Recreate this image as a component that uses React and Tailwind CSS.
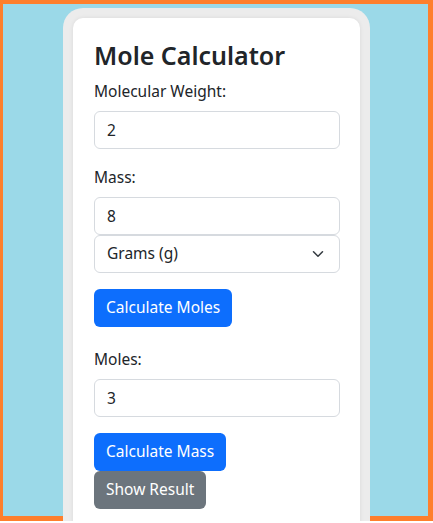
import React from 'react';

const font = { fontFamily: '"Noto Sans", "Open Sans", sans-serif' };

const Field = ({ label, value, className = '' }) => (
  <div className={className}>
    <label className="block text-[15.5px] leading-6 mb-2 text-[#212529]">{label}</label>
    <input
      type="text"
      defaultValue={value}
      className="block w-full h-[38px] px-3 text-[15.5px] text-[#212529] bg-white border border-[#d6dadf] rounded-[6px] outline-none"
    />
  </div>
);

const App = () => {
  return (
    <div
      className="h-[521px] bg-[#9bd9e8] border-[#fe7f2c] border-t-4 border-l-[3px] border-r-[5px] border-b-[5px] flex items-start pt-1 pl-[60px]"
      style={font}
    >
      <div className="w-[307px] bg-[#ececec] rounded-[20px] p-[10px]">
        <div className="bg-white rounded-[10px] pl-[21px] pr-5 pt-[22px] pb-6 shadow-[0_0_4px_rgba(0,0,0,0.08)]">
          <h2 className="text-[25px] leading-[31px] font-semibold text-[#212529] mb-2">Mole Calculator</h2>

          <Field label="Molecular Weight:" value="2" className="mb-4" />

          <div className="mb-4">
            <label className="block text-[15.5px] leading-6 mb-2 text-[#212529]">Mass:</label>
            <input
              type="text"
              defaultValue="8"
              className="block w-full h-[38px] px-3 text-[15.5px] text-[#212529] bg-white border border-[#d6dadf] rounded-[6px] outline-none"
            />
            <div className="relative">
              <select
                defaultValue="g"
                className="block w-full h-[38px] pl-3 pr-9 text-[15.5px] text-[#212529] bg-white border border-[#d6dadf] rounded-[6px] appearance-none outline-none"
                style={font}
              >
                <option value="g">Grams (g)</option>
                <option value="kg">Kilograms (kg)</option>
              </select>
              <svg
                className="pointer-events-none absolute right-[14px] top-1/2 -translate-y-1/2"
                width="16"
                height="12"
                viewBox="0 0 16 16"
                fill="none"
                stroke="#343a40"
                strokeWidth="2"
                strokeLinecap="round"
                strokeLinejoin="round"
              >
                <path d="m2 5 6 6 6-6" />
              </svg>
            </div>
          </div>

          <button className="block h-[38px] px-3 rounded-[6px] bg-[#0d6efd] text-white text-[15.5px] mb-5">
            Calculate Moles
          </button>

          <Field label="Moles:" value="3" className="mb-4" />

          <button className="block h-[38px] px-3 rounded-[6px] bg-[#0d6efd] text-white text-[15.5px]">
            Calculate Mass
          </button>
          <button className="block h-[38px] px-3 rounded-[6px] bg-[#6c757d] text-white text-[15.5px]">
            Show Result
          </button>
        </div>
      </div>
    </div>
  );
};

export default App;
